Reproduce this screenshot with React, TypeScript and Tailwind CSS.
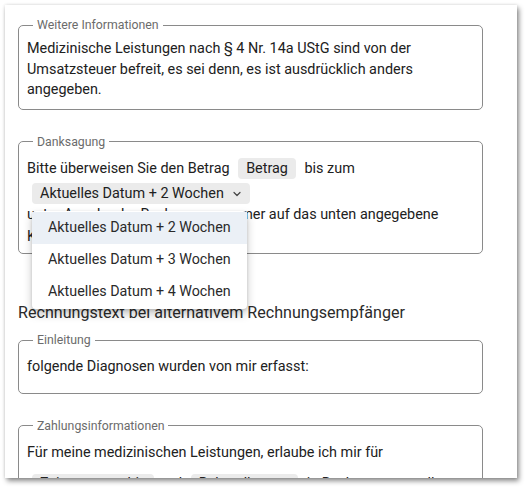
import React from "react";

const font = { fontFamily: "Roboto, 'Noto Sans', sans-serif" };

function Chip({ children, chevron = false }: { children: React.ReactNode; chevron?: boolean }) {
  return (
    <span className="inline-flex h-[21px] items-center gap-[6px] rounded-[4px] bg-[#ebebeb] px-[8px] leading-[20px] text-[#212121] align-middle">
      {children}
      {chevron && (
        <svg width="10" height="10" viewBox="0 0 10 10" className="ml-[2px]">
          <path d="M2 3.5 L5 6.5 L8 3.5" fill="none" stroke="#444" strokeWidth="1.2" strokeLinecap="round" strokeLinejoin="round" />
        </svg>
      )}
    </span>
  );
}

function Field({ label, children, className = "" }: { label: string; children: React.ReactNode; className?: string }) {
  return (
    <fieldset className={`rounded-[5px] border border-[#8a8a8a] px-[8px] ${className}`}>
      <legend className="ml-[6px] px-[4px] text-[12.3px] leading-[14px] text-[#6b6b6b]">{label}</legend>
      {children}
    </fieldset>
  );
}

const body = "text-[14.4px] text-[#212121]";

export default function App() {
  const options = ["Aktuelles Datum + 2 Wochen", "Aktuelles Datum + 3 Wochen", "Aktuelles Datum + 4 Wochen"];
  return (
    <div className="h-[488px] w-[526px] bg-white" style={font}>
      <div className="ml-[5px] mt-[5px] h-[473px] w-[512px] overflow-hidden bg-white pl-[13px] pr-[34px] pt-[13px] shadow-[2px_3px_5px_rgba(0,0,0,0.45),0_0_3px_rgba(0,0,0,0.12)]">
        <Field label="Weitere Informationen" className="pb-[8px] pt-[7px]">
          <p className={`${body} leading-[20.5px]`}>
            Medizinische Leistungen nach § 4 Nr. 14a UStG sind von der Umsatzsteuer befreit, es sei denn, es ist ausdrücklich anders angegeben.
          </p>
        </Field>

        <Field label="Danksagung" className="mt-[25px] pb-[6px] pt-[7px]">
          <div className={body}>
            <div className="leading-[26px]">
              Bitte überweisen Sie den Betrag <span className="mx-[5px]"><Chip>Betrag</Chip></span> bis zum
            </div>
            <div className="relative ml-[5px] mt-[1px] w-fit">
              <Chip chevron>Aktuelles Datum + 2 Wochen</Chip>
              <div className="absolute left-0 top-[28px] z-10 w-[215px] rounded-[4px] bg-white py-[1px] shadow-[0_5px_10px_rgba(0,0,0,0.22),0_1px_3px_rgba(0,0,0,0.15)]">
                {options.map((o, i) => (
                  <div
                    key={o}
                    className={`flex h-[32px] items-center pl-[16px] text-[14.3px] text-[#2a2a2a] ${i === 0 ? "bg-[#ebf0f6]" : ""}`}
                  >
                    {o}
                  </div>
                ))}
              </div>
            </div>
            <div className="leading-[21.5px]">
              unter Angabe der Rechnungsnummer auf das unten angegebene Konto.
            </div>
          </div>
        </Field>

        <h2 className="mt-[47px] text-[16.1px] leading-[24px] text-[#2b2b2b]">
          Rechnungstext bei alternativem Rechnungsempfänger
        </h2>

        <Field label="Einleitung" className="mt-[8px] pb-[15px] pt-[10px]">
          <p className={`${body} leading-[20.5px]`}>folgende Diagnosen wurden von mir erfasst:</p>
        </Field>

        <Field label="Zahlungsinformationen" className="mt-[25px] pb-[9px] pt-[10px]">
          <div className={body}>
            <div className="leading-[20.5px]">Für meine medizinischen Leistungen, erlaube ich mir für</div>
            <div className="mt-[10px] leading-[22px]">
              <span className="ml-[5px]"><Chip>Zeitraum von bis</Chip></span> und{" "}
              <span className="mx-[5px]"><Chip>Behandlungen</Chip></span> in Rechnung zu stellen.
            </div>
          </div>
        </Field>
      </div>
    </div>
  );
}
